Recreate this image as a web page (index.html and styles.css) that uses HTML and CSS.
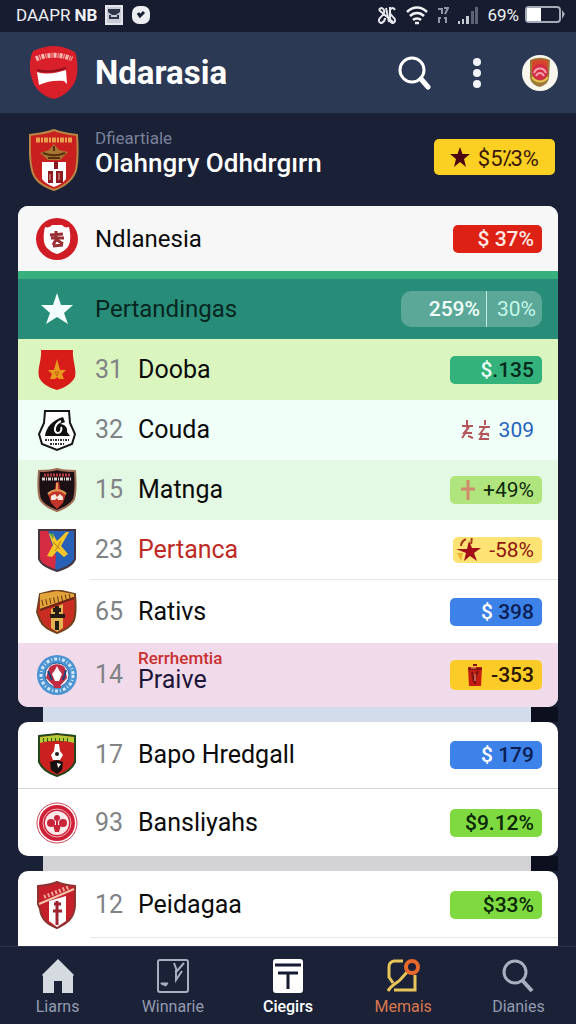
FILE: index.html
```html
<!DOCTYPE html>
<html lang="id">
<head>
    <meta charset="UTF-8">
    <meta name="viewport" content="width=device-width, initial-scale=1.0">
    <title>Ndarasia</title>
    <link rel="stylesheet" href="styles.css">
</head>
<body>
    <div class="statusbar">
        <span class="carrier">DAAPR <b>NB</b></span>
        <svg width="18" height="20" viewBox="0 0 18 20"><rect x="1" y="1" width="16" height="18" fill="#c9ccd6" stroke="#e4e6ec" stroke-width="2"/><path d="M3 4h12v3l-4 3H7L3 7z" fill="#30364a"/><path d="M5 10v3h8v-3" fill="none" stroke="#30364a" stroke-width="2"/></svg>
        <svg width="20" height="18" viewBox="0 0 20 18"><rect x="1" width="18" height="18" rx="7" fill="#eceef2"/><path d="M7 7l2 3 4-4" fill="none" stroke="#1a1f33" stroke-width="3"/></svg>
        <span class="spacer"></span>
        <svg width="20" height="18" viewBox="0 0 20 18" fill="none" stroke="#e4e6ec" stroke-width="2"><path d="M2 4c2-4 6-1 5 3s-6 4-5 8 6 1 6-3M9 2l3 14M18 4c-2-4-6-1-5 3s6 4 5 8-6 1-6-3M2 4l14 12M13 1v13"/></svg>
        <svg width="24" height="20" viewBox="0 0 24 20" fill="none" stroke="#f2f3f6" stroke-width="2.5"><path d="M2 7c6-6 14-6 20 0M5 11c4-4 10-4 14 0M8 15c2-2 6-2 8 0"/><path d="M10 18h4"/></svg>
        <svg width="12" height="18" viewBox="0 0 12 18" fill="none" stroke="#9096a6" stroke-width="2"><path d="M1 3h4v5M7 2h4l-3 6M2 12v5M1 12h3M9 11v6M7 12h3"/></svg>
        <svg width="22" height="20" viewBox="0 0 22 20"><path d="M1 19v-3h2v3zM5 19v-5h2v5zM9 19v-8h3v8z" fill="#c6cad4"/><path d="M14 19V6h3v13zM18 19V2h3v17z" fill="#5d6374"/></svg>
        <span class="percent">69%</span>
        <svg width="40" height="18" viewBox="0 0 40 18"><rect x="1" y="1" width="34" height="15" rx="3" fill="none" stroke="#a5abb9" stroke-width="2"/><path d="M2 2h14v13H2z" fill="#fff"/><path d="M37 4l3 4-3 5z" fill="#a5abb9"/></svg>
    </div>

    <header class="appbar">
        <svg class="logo" width="48" height="54" viewBox="0 0 48 54">
            <path d="M24 0c8 0 15 3 21 6 3 8 3 19 1 27-3 9-11 17-22 20C12 50 4 42 2 33-1 25-1 13 3 5 9 2 17 0 24 0z" fill="#d81f2a"/>
            <path d="M6 13c10-5 26-5 36 0" fill="none" stroke="#f6b9b2" stroke-width="5" stroke-dasharray="3 1 1 1"/>
            <path d="M7 26c10 3 20 1 29-2l1 14-3-3c-8-1-17 0-25 4z" fill="#fff"/>
            <path d="M7 24c10 3 20 1 29-2" fill="none" stroke="#8e101d" stroke-width="2"/>
        </svg>
        <h1>Ndarasia</h1>
        <button class="icon-btn" aria-label="Search">
            <svg width="34" height="34" viewBox="0 0 34 34" fill="none" stroke="#fff"><circle cx="14" cy="14" r="12" stroke-width="3"/><path d="M23 23l7 8" stroke-width="5" stroke-linecap="round"/></svg>
        </button>
        <button class="icon-btn more" aria-label="More">
            <svg width="10" height="30" viewBox="0 0 10 30" fill="#f1f3f8"><circle cx="5" cy="4" r="4"/><circle cx="5" cy="15" r="4"/><circle cx="5" cy="26" r="4"/></svg>
        </button>
        <button class="icon-btn" aria-label="Profile">
            <svg width="36" height="36" viewBox="0 0 36 36"><circle cx="18" cy="18" r="18" fill="#faf7ef"/><path d="M8 5c7-3 13-3 20 0l-1 18c-1 5-4 7-9 9-5-1-9-4-10-9z" fill="#9b7a3a"/><path d="M10 6c5-2 11-2 16 0l-1 9H10z" fill="#d5452b"/><circle cx="18" cy="17" r="8" fill="#d62b45"/><path d="M12 18c2-6 10-6 12 0M14 21c2-4 6-4 8 0" fill="none" stroke="#f2a4ae" stroke-width="2"/><path d="M10 22c4 6 12 6 16 0" fill="none" stroke="#e8c14a" stroke-width="2"/></svg>
        </button>
    </header>

    <section class="feature">
        <svg class="logo" width="50" height="62" viewBox="0 0 50 62">
            <path d="M25 1c7 3 15 4 23 5 1 14 1 25-1 35-3 10-11 16-22 20C13 57 5 51 3 41 0 30 1 17 1 6c8-1 17-2 24-5z" fill="#c9201f" stroke="#b98545" stroke-width="2"/>
            <path d="M7 11h36" stroke="#e9a04e" stroke-width="5" stroke-dasharray="4 1 2 1"/>
            <path d="M13 33h24v17c-3 4-7 6-12 8-5-2-9-4-12-8z" fill="#fff"/>
            <path d="M25 15l5 6 9 2-8 8H19l-8-7 9-3z" fill="#a87532"/><path d="M14 24c7 3 15 3 22 0M19 29h12M25 17v5" stroke="#54300f" stroke-width="2" fill="none"/>
            <path d="M25 32h4v8h-4zM19 42h5v12h-5zM27 42h7v12h-7z" fill="#8d1a1f"/><path d="M21 45v6M30 44v7" stroke="#e8b0aa" stroke-width="1"/>
        </svg>
        <div class="feature-text">
            <small>Dfieartiale</small>
            <h2>Olahngry Odhdrgırn</h2>
        </div>
        <span class="badge-lg">
            <svg width="20" height="20" viewBox="0 0 20 20"><path d="M10 0l2.500 7H20l-6 5 2 8-6-5-6 5 2-8-6-5h7.500z" fill="#4a0711"/></svg>
            $5⁒3%
        </span>
    </section>

    <main class="content">
        <ul class="card">
            <li class="row head">
                <svg class="crest" width="42" height="44" viewBox="0 0 42 44"><circle cx="21" cy="22" r="21" fill="#d01d25"/><path d="M9 10c3 1 5 0 7-2h10c2 2 4 3 7 2 2 8 2 17-2 21-3 3-6 5-10 6-4-1-7-3-10-6-4-4-4-13-2-21z" fill="#fff"/><path d="M20 14v6M14 18l13-1M15 21h13M21 21l-4 7M21 23l6 4M17 29l10-1" fill="none" stroke="#9a3034" stroke-width="3"/></svg>
                <span class="name">Ndlanesia</span>
                <span class="badge red narrow">$ 37%</span>
            </li>
            <li class="row live">
                <svg class="crest" width="42" height="44" viewBox="0 0 42 44"><path d="M21 6l4 12h12l-9 8 4 11-11-7-11 7 4-11-9-8h12z" fill="#f2fffd"/></svg>
                <span class="name">Pertandingas</span>
                <span class="odds"><span>259%</span><span class="odd-alt">30%</span></span>
            </li>
            <li class="row lime">
                <svg class="crest" width="42" height="44" viewBox="0 0 42 44"><path d="M5 2h32c-1 9 4 20 2 27-3 6-10 11-18 13C13 40 5 35 3 29 1 21 6 11 5 2z" fill="#d81d18"/><path d="M21 11l3 11h6l-4 4 2 5h-5l-2-2-2 2h-5l2-5-4-4h6z" fill="#e9991f"/><path d="M19 24h4l-2 4z" fill="none" stroke="#b9650f"/></svg>
                <span class="rank">31</span>
                <span class="name">Dooba</span>
                <span class="badge green">$<b>.135</b></span>
            </li>
            <li class="row mint">
                <svg class="crest" width="42" height="44" viewBox="0 0 42 44"><path d="M9 3h24l1 12 5 11-3 10-15 6-15-6-3-10 5-11z" fill="#fff" stroke="#161616" stroke-width="2"/><path d="M9 28c1-9 8-16 18-19l2 5-5 2c5 0 8 4 7 8l3 4H9z" fill="#101010"/><path d="M25 13c-7 3-8 12-3 12 3 0 4-4 3-6" stroke="#fff" stroke-width="2" fill="none"/><path d="M9 32h24M14 36h15" stroke="#333" stroke-width="2" stroke-dasharray="2 1 1 1"/></svg>
                <span class="rank">32</span>
                <span class="name">Couda</span>
                <span class="badge plain">
                    <svg width="30" height="22" viewBox="0 0 30 22" fill="none" stroke="#b2565c" stroke-width="2"><path d="M6 1v8M1 7h11M8 8l-5 6h8M6 12l-5 7M7 17l5 2M24 1v5M18 8h11M24 8l-5 7h9M22 14l-3 6h9M25 14l3 3"/></svg>
                    309
                </span>
            </li>
            <li class="row pale">
                <svg class="crest" width="42" height="44" viewBox="0 0 42 44"><path d="M21 1c6 2 12 2 18 2 1 13 1 21-1 28-3 6-9 9-17 12C13 40 7 37 4 31 2 24 2 14 3 3c6 0 12 0 18-2z" fill="#1c1014" stroke="#9d6d55" stroke-width="2"/><path d="M8 7h26" stroke="#b93b3f" stroke-width="3" stroke-dasharray="2 1"/><path d="M6 11h30" stroke="#ded3d0" stroke-width="3" stroke-dasharray="3 1 1 1"/><path d="M20 14h3l1 7 6 5-3 9-6 6-6-6-3-9 7-5z" fill="#c2352b"/><path d="M21 15v7M12 26c5-5 13-5 18 0" stroke="#e29c5a" stroke-width="2" fill="none"/><path d="M15 28l4-2 2 3 3-3 3 3v3h-5l-1-2-2 2h-4z" fill="#fae9df"/></svg>
                <span class="rank">15</span>
                <span class="name">Matnga</span>
                <span class="badge light">
                    <svg width="14" height="20" viewBox="0 0 14 20"><path d="M7 0v20M0 9h14" stroke="#d08a6c" stroke-width="3"/></svg>
                    +49%
                </span>
            </li>
            <li class="row line hot">
                <svg class="crest" width="42" height="44" viewBox="0 0 42 44"><path d="M3 2h36v29c-2 6-9 9-18 12C13 40 5 37 3 31z" fill="#2762b8"/><path d="M3 2h9l3 12 5 14-1 14C11 39 5 37 3 31z" fill="#d52c43"/><path d="M3 2h36v29c-2 6-9 9-18 12C13 40 5 37 3 31z" fill="none" stroke="#46353f" stroke-width="2"/><path d="M13 6h4l4 7 9-9h3l-8 14 7 8-4 3-7-6-5 6-5-1 6-11z" fill="#f4c62a"/><path d="M13 5l5 1-1 5z" fill="#5aa34a"/><path d="M17 14l7 7M25 13l-6 10" stroke="#b5821c" stroke-width="1"/></svg>
                <span class="rank">23</span>
                <span class="name">Pertanca</span>
                <span class="badge yellow narrow">
                    <svg width="26" height="24" viewBox="0 0 26 24"><path d="M14 3l3 7h9l-7 5 3 8-7-5-6 5 2-8-10-4h11z" fill="#a30f16"/><path d="M6 8c0-4 2-5 5-7M16 6c1-3 0-4 1-6" fill="none" stroke="#a33a16" stroke-width="2"/><path d="M2 15h6l-2 8z" fill="#eeb52c"/></svg>
                    -58%
                </span>
            </li>
            <li class="row tall">
                <svg class="crest" width="42" height="44" viewBox="0 0 42 44"><path d="M21 0l18 4c1 12 1 20-1 26-3 7-9 10-17 13C13 40 7 37 4 30L1 22 4 4z" fill="#c92c20" stroke="#70411d" stroke-width="2"/><path d="M4 4l17-3 17 3v3L4 19z" fill="#e2a43b"/><path d="M6 13L37 6" stroke="#69380e" stroke-width="6" stroke-dasharray="1 3"/><path d="M4 20l34-12" stroke="#6b2715" stroke-width="2"/><path d="M15 19l12-5v24l-6 4-6-4z" fill="#e1b351"/><path d="M17 20h8M14 26h15M21 16v10M21 31v9" fill="none" stroke="#251c13" stroke-width="4"/></svg>
                <span class="rank">65</span>
                <span class="name">Rativs</span>
                <span class="badge blue">$<b>&nbsp;398</b></span>
            </li>
            <li class="row pink">
                <svg class="crest" width="42" height="44" viewBox="0 0 42 44"><circle cx="21" cy="22" r="20" fill="#4b93d1"/><circle cx="21" cy="22" r="16" fill="none" stroke="#d2e7f8" stroke-width="3" stroke-dasharray="3 2 1 2"/><circle cx="21" cy="22" r="12" fill="#f3eff6" stroke="#28659f" stroke-width="1"/><path d="M13 15c4-5 12-5 16 0l2 10-7 8h-6l-8-8z" fill="#c02c43"/><path d="M19 17l2-4 2 4 3 4-3 7h-4l-3-7z" fill="#fff"/><path d="M12 18l4 9M30 17l-3 10" stroke="#1f4176" stroke-width="2"/><path d="M18 34h7" stroke="#c02c43" stroke-width="2"/></svg>
                <span class="rank">14</span>
                <span class="name"><small>Rerrhemtia</small>Praive</span>
                <span class="badge amber">
                    <svg width="16" height="22" viewBox="0 0 16 22"><path d="M1 3h14l-1 19H2z" fill="#c41e12"/><path d="M1 5h14M6 1h4M5 8l2 10M11 7l-3 6v7" fill="none" stroke="#7a130c" stroke-width="2"/><path d="M4 4h5M8 10v7" stroke="#f3a28e" stroke-width="1"/></svg>
                    -353
                </span>
            </li>
        </ul>

        <div class="link"></div>

        <ul class="card">
            <li class="row big full-line">
                <svg class="crest" width="42" height="44" viewBox="0 0 42 44"><path d="M21 1c6 1 12 1 18 2v26c-3 7-9 11-18 14C12 40 6 36 3 29V3c6-1 12-1 18-2z" fill="#cb2020" stroke="#23471c" stroke-width="2"/><path d="M4 4l17-2 17 2v6c-10-3-24-3-34 0z" fill="#b6cb38"/><path d="M7 7h28" stroke="#355a16" stroke-width="4" stroke-dasharray="1 3"/><path d="M19 11h4l1 7 3 4-3 5h-7l-2-5 3-4z" fill="#fff"/><path d="M14 29l7-2 6 2-1 8-5 4-6-4z" fill="#16110f"/><path d="M21 30l4 1-3 4z" fill="#fff"/><circle cx="21" cy="21" r="2" fill="#222"/></svg>
                <span class="rank">17</span>
                <span class="name">Bapo Hredgall</span>
                <span class="badge blue">$<b>&nbsp;179</b></span>
            </li>
            <li class="row big">
                <svg class="crest" width="42" height="44" viewBox="0 0 42 44"><circle cx="21" cy="22" r="20" fill="#fff" stroke="#cf4453" stroke-width="1"/><circle cx="21" cy="22" r="18" fill="#cf2037"/><circle cx="21" cy="22" r="14" fill="none" stroke="#f0b5bb" stroke-width="1"/><circle cx="21" cy="22" r="12" fill="#fbe9ea"/><circle cx="21" cy="17" r="3" fill="#c8253a"/><circle cx="15" cy="22" r="4" fill="#c8253a"/><circle cx="27" cy="22" r="4" fill="#c8253a"/><path d="M17 24h8l-2 7h-4zM20 18h2v8h-2z" fill="#c8253a"/></svg>
                <span class="rank">93</span>
                <span class="name">Bansliyahs</span>
                <span class="badge grass">$9.12%</span>
            </li>
        </ul>

        <div class="link grey"></div>

        <ul class="card">
            <li class="row big line">
                <svg class="crest" width="42" height="48" viewBox="0 0 42 48"><path d="M21 1c6 3 12 3 18 4v20c-1 12-7 17-18 22C11 43 5 38 4 28l-2-5V5c7-1 13-1 19-4z" fill="#c51f2a" stroke="#8c3230" stroke-width="2"/><path d="M13 20l17-5v25l-9 6-8-6z" fill="#fff"/><path d="M3 23l35-15" stroke="#f1c5a9" stroke-width="2"/><path d="M8 16l25-10" stroke="#efa59a" stroke-width="4" stroke-dasharray="2 2"/><path d="M21 20v24M18 23h7M17 30h9" stroke="#a02430" stroke-width="3"/></svg>
                <span class="rank">12</span>
                <span class="name">Peidagaa</span>
                <span class="badge grass">$33%</span>
            </li>
            <li class="row big"></li>
        </ul>
    </main>

    <nav class="tabs">
        <a href="#" class="tab">
            <svg width="34" height="34" viewBox="0 0 34 34"><path d="M17 0l16 16-1 1v17H21V22h-8v12H2V17l-1-1z" fill="#d5d9e0"/></svg>
            Liarns
        </a>
        <a href="#" class="tab">
            <svg width="34" height="34" viewBox="0 0 34 34" fill="none" stroke="#a9afc0"><rect x="2" y="1" width="30" height="32" rx="2" stroke-width="2"/><path d="M18 4l3 8 7-8M20 11v10l6-9" stroke-width="2"/><path d="M5 24h7l-2 3-5-2z" fill="#a9afc0"/></svg>
            Winnarie
        </a>
        <a href="#" class="tab active">
            <svg width="34" height="34" viewBox="0 0 34 34"><rect x="2" width="30" height="34" rx="3" fill="#fff"/><path d="M4 6h26M7 14h20M17 14v16" stroke="#151b30" stroke-width="3" fill="none"/></svg>
            Ciegirs
        </a>
        <a href="#" class="tab orange">
            <svg width="34" height="34" viewBox="0 0 34 34" fill="none"><path d="M17 2H8Q3 3 3 8v10l4 6M29 16v15H8M2 32c3-6 8-7 12-11l8-9" stroke="#e7c55b" stroke-width="3"/><circle cx="26" cy="8" r="6" stroke="#e8692c" stroke-width="4"/></svg>
            Memais
        </a>
        <a href="#" class="tab">
            <svg width="34" height="34" viewBox="0 0 34 34" fill="none" stroke="#a9afc0"><circle cx="14" cy="13" r="11" stroke-width="3"/><path d="M21 21l10 11" stroke-width="4"/></svg>
            Dianies
        </a>
    </nav>
</body>
</html>
```

FILE: styles.css
```css
* {
    box-sizing: border-box;
}
body {
    margin: 0;
    height: 100vh;
    display: flex;
    flex-direction: column;
    background-color: #1a2036;
    color: #0b0b0b;
    font-family: Roboto, "Liberation Sans", sans-serif;
}
svg {
    flex: none;
}
h1, h2, ul {
    margin: 0;
    padding: 0;
}
button {
    padding: 0;
    border: none;
    background: none;
    cursor: pointer;
}

.statusbar {
    flex: none;
    display: flex;
    align-items: center;
    gap: 8px;
    height: 32px;
    padding: 0 11px 2px 16px;
    background-color: #181c30;
    color: #eef0f4;
    font-size: 17px;
}
.percent {
    margin-right: -2px;
}
.spacer {
    flex: 1;
}

.appbar {
    flex: none;
    display: flex;
    align-items: center;
    height: 81px;
    padding: 0 18px 0 30px;
    background-color: #2b3955;
    color: #fff;
}
.appbar h1 {
    flex: 1;
    padding-left: 17px;
    font-size: 33px;
    line-height: 40px;
    font-weight: 700;
}
.icon-btn {
    display: flex;
}
.more {
    padding: 0 40px;
}

.feature {
    flex: none;
    display: flex;
    align-items: center;
    height: 93px;
    padding: 0 21px 0 29px;
    color: #fff;
}
.feature-text {
    flex: 1;
    padding: 0 0 14px 16px;
}
.feature small {
    display: block;
    color: #79819a;
    font-size: 17px;
    line-height: 20px;
}
.feature h2 {
    font-size: 26px;
    line-height: 30px;
    font-weight: 500;
    white-space: nowrap;
}
.badge-lg {
    display: flex;
    align-items: center;
    gap: 8px;
    height: 36px;
    margin-bottom: 6px;
    padding: 0 16px;
    border-radius: 5px;
    background-color: #fbd022;
    color: #3b1708;
    font-size: 22px;
}

.content {
    flex: 1;
    min-height: 0;
    overflow: hidden;
    padding: 0 18px;
}
.card {
    overflow: hidden;
    border-radius: 10px;
    background-color: #fff;
    list-style: none;
}
.row {
    position: relative;
    display: flex;
    align-items: center;
    height: 60px;
    padding: 0 16px 0 18px;
    font-size: 25px;
    line-height: 30px;
}
.crest {
    margin-right: 17px;
}
.rank {
    width: 43px;
    color: #808386;
}
.name {
    flex: 1;
}
.name small {
    display: block;
    color: #c9302f;
    font-size: 17px;
    line-height: 16px;
    font-weight: 500;
}
.pink .name {
    padding-bottom: 6px;
    line-height: 28px;
    color: #1d1638;
}
.hot .name {
    color: #be2a23;
}
.head {
    height: 65px;
    background-color: #f7f7f8;
    font-size: 24px;
}
.live {
    height: 68px;
    border-top: 8px solid #38b07d;
    background-color: #288d78;
    color: #06251f;
    font-size: 24px;
}
.lime {
    height: 61px;
    background-color: #daf5bd;
}
.mint {
    background-color: #f0fff8;
}
.pale {
    background-color: #e4f9e3;
}
.tall {
    height: 63px;
}
.pink {
    height: 64px;
    background-color: #f1daea;
}
.big {
    height: 67px;
}
.full-line {
    border-bottom: 1px solid #d2d2d4;
}
/* divider that starts at the rank column */
.line::after {
    content: "";
    position: absolute;
    left: 72px;
    right: 0;
    bottom: 0;
    border-bottom: 1px solid #e6e6e8;
}

.badge {
    display: flex;
    align-items: center;
    justify-content: flex-end;
    gap: 8px;
    width: 92px;
    height: 28px;
    padding-right: 8px;
    border-radius: 5px;
    font-size: 21px;
    font-weight: 500;
    white-space: nowrap;
}
.badge b {
    margin-left: -8px;
    font-weight: 500;
}
.narrow {
    width: 89px;
}
.red {
    background-color: #dd2115;
    color: #ffe9e4;
}
.green {
    background-color: #33b27c;
    color: #e9fff4;
}
.green b {
    color: #06291a;
}
.plain {
    color: #2463bd;
    font-weight: 400;
}
.light {
    background-color: #b0e47c;
    color: #0e2a0c;
    font-weight: 400;
}
.yellow {
    height: 26px;
    background-color: #fde374;
    color: #8e1510;
    font-weight: 400;
}
.blue {
    background-color: #3d82e8;
    color: #fff;
}
.blue b {
    color: #0b1f55;
}
.amber {
    height: 30px;
    background-color: #fbcb27;
    color: #2a1606;
}
.grass {
    background-color: #7fda42;
    color: #0a2706;
}
.odds {
    display: flex;
    align-items: center;
    width: 141px;
    height: 36px;
    border-radius: 10px;
    background-color: #5ba898;
    color: #f2fffb;
    font-size: 21px;
    font-weight: 500;
}
.odds span {
    flex: 1;
    padding-right: 6px;
    text-align: right;
    line-height: 36px;
}
.odds .odd-alt {
    flex: none;
    width: 56px;
    border-left: 1px solid #c4ebe1;
    color: #c4f7ea;
    font-weight: 400;
}

/* strip showing between two cards */
.link {
    height: 15px;
    margin-left: 25px;
    border-right: 27px solid #0c0f1e;
    background-color: #d3dceb;
}
.grey {
    background-color: #d3d3d5;
}

.tabs {
    flex: none;
    display: flex;
    justify-content: space-around;
    height: 78px;
    padding-top: 12px;
    border-top: 1px solid #2a3350;
    background-color: #1b2238;
}
.tab {
    flex: 1;
    display: flex;
    flex-direction: column;
    align-items: center;
    gap: 4px;
    color: #949bb0;
    font-size: 16px;
    line-height: 20px;
    text-decoration: none;
}
.active {
    color: #fff;
    font-weight: 500;
}
.orange {
    color: #d9784c;
}
```
